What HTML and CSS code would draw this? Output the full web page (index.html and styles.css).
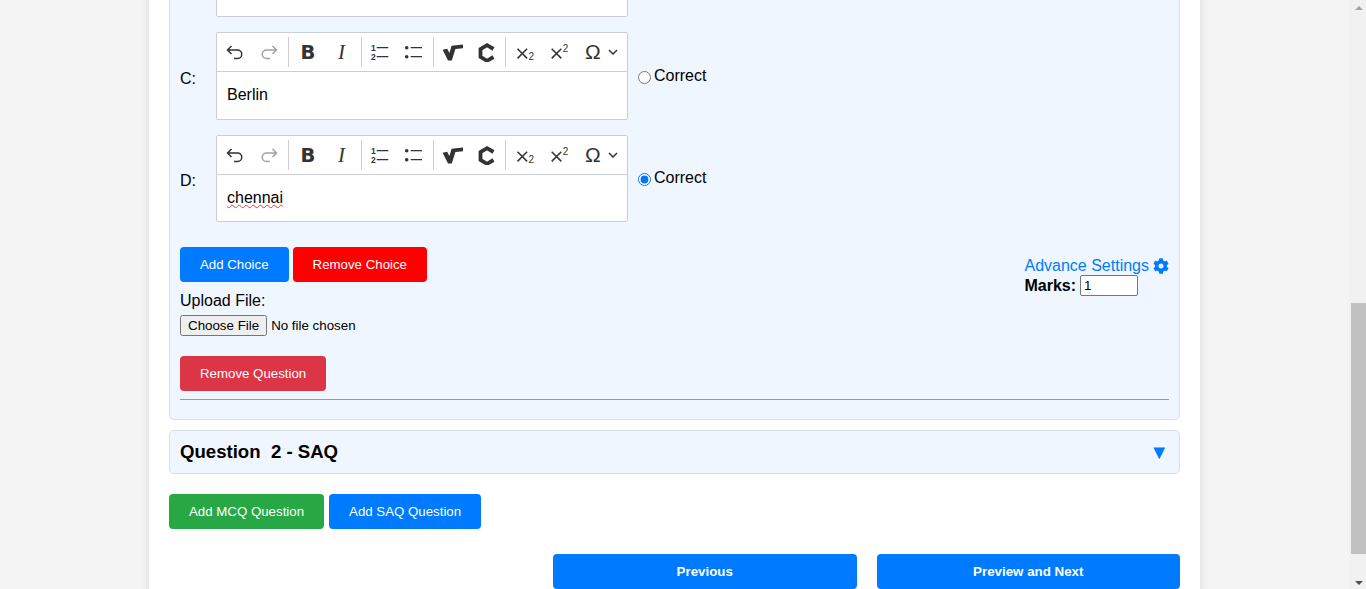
FILE: index.html
```html
<!DOCTYPE html>
<html lang="en">
<head>
    <meta charset="UTF-8">
    <meta name="viewport" content="width=device-width, initial-scale=1.0">
    <title>Edit Questions</title>
    <link rel="stylesheet" href="styles.css">
</head>
<body>
    <!-- toolbar icons, reused by every editor -->
    <svg class="icon-defs" aria-hidden="true">
        <symbol id="i-undo" viewBox="0 0 20 20">
            <path class="line" d="M6.5 4 2.5 8l4 4M3 8h9.5a4.2 4.2 0 0 1 0 8.5H9"/>
        </symbol>
        <symbol id="i-redo" viewBox="0 0 20 20">
            <path class="line" d="M13.5 4l4 4-4 4M17 8H7.5a4.2 4.2 0 0 0 0 8.5H11"/>
        </symbol>
        <symbol id="i-bold" viewBox="0 0 20 20">
            <text class="t-bold" x="10" y="17" text-anchor="middle">B</text>
        </symbol>
        <symbol id="i-italic" viewBox="0 0 20 20">
            <text class="t-italic" x="9.5" y="17" text-anchor="middle">I</text>
        </symbol>
        <symbol id="i-numbered" viewBox="0 0 20 20">
            <text class="t-small" x="1" y="8.5">1</text>
            <text class="t-small" x="1" y="17.5">2</text>
            <path class="thin" d="M6.7 5.7h11.6M6.7 14.7h11.6"/>
        </symbol>
        <symbol id="i-bullet" viewBox="0 0 20 20">
            <circle class="solid" cx="2.7" cy="5.7" r="1.8"/>
            <circle class="solid" cx="2.7" cy="14.7" r="1.8"/>
            <path class="thin" d="M6.7 5.7H18M6.7 14.7H18"/>
        </symbol>
        <symbol id="i-sqrt" viewBox="0 0 22 20">
            <path class="solid" d="M.6 7.8 5.2 6.8l2.2 4.2L9.6 3.8 21 2.6v3.6l-7.6.8L9.8 18.4H6z"/>
        </symbol>
        <symbol id="i-chem" viewBox="0 0 20 20">
            <path class="heavy" d="M17.5 7 11 3.2 4.5 7v8l6.5 3.8 6.5-3.8"/>
        </symbol>
        <symbol id="i-sub" viewBox="0 0 20 20">
            <path class="line" d="M3.5 6.8l9.6 9.6M13.1 6.8l-9.6 9.6"/>
            <text class="t-script" x="14.6" y="18">2</text>
        </symbol>
        <symbol id="i-sup" viewBox="0 0 20 20">
            <path class="line" d="M3.7 6.8l9.6 9.6M13.3 6.8l-9.6 9.6"/>
            <text class="t-script" x="14.8" y="9.6">2</text>
        </symbol>
    </svg>

    <div class="page">
        <div class="card">
            <div class="question-panel open">
                <div class="choice-row">
                    <span class="choice-label"></span>
                    <div class="editor"><div class="editor-body stub"></div></div>
                </div>

                <div class="choice-row">
                    <span class="choice-label">C:</span>
                    <div class="editor">
                        <div class="toolbar">
                            <span class="tool"><svg class="icon"><use href="#i-undo"/></svg></span>
                            <span class="tool off"><svg class="icon"><use href="#i-redo"/></svg></span>
                            <span class="sep wide"></span>
                            <span class="tool"><svg class="icon"><use href="#i-bold"/></svg></span>
                            <span class="tool"><svg class="icon"><use href="#i-italic"/></svg></span>
                            <span class="sep"></span>
                            <span class="tool"><svg class="icon"><use href="#i-numbered"/></svg></span>
                            <span class="tool"><svg class="icon"><use href="#i-bullet"/></svg></span>
                            <span class="sep"></span>
                            <span class="tool"><svg class="icon icon-wide"><use href="#i-sqrt"/></svg></span>
                            <span class="tool"><svg class="icon"><use href="#i-chem"/></svg></span>
                            <span class="sep"></span>
                            <span class="tool"><svg class="icon"><use href="#i-sub"/></svg></span>
                            <span class="tool"><svg class="icon"><use href="#i-sup"/></svg></span>
                            <span class="tool-drop">
                                <span class="omega">Ω</span>
                                <svg class="chevron" viewBox="0 0 10 6"><path class="line" d="M1 1l4 4 4-4"/></svg>
                            </span>
                        </div>
                        <div class="editor-body">Berlin</div>
                    </div>
                    <label class="correct"><input type="radio" name="correct">Correct</label>
                </div>

                <div class="choice-row">
                    <span class="choice-label">D:</span>
                    <div class="editor">
                        <div class="toolbar">
                            <span class="tool"><svg class="icon"><use href="#i-undo"/></svg></span>
                            <span class="tool off"><svg class="icon"><use href="#i-redo"/></svg></span>
                            <span class="sep wide"></span>
                            <span class="tool"><svg class="icon"><use href="#i-bold"/></svg></span>
                            <span class="tool"><svg class="icon"><use href="#i-italic"/></svg></span>
                            <span class="sep"></span>
                            <span class="tool"><svg class="icon"><use href="#i-numbered"/></svg></span>
                            <span class="tool"><svg class="icon"><use href="#i-bullet"/></svg></span>
                            <span class="sep"></span>
                            <span class="tool"><svg class="icon icon-wide"><use href="#i-sqrt"/></svg></span>
                            <span class="tool"><svg class="icon"><use href="#i-chem"/></svg></span>
                            <span class="sep"></span>
                            <span class="tool"><svg class="icon"><use href="#i-sub"/></svg></span>
                            <span class="tool"><svg class="icon"><use href="#i-sup"/></svg></span>
                            <span class="tool-drop">
                                <span class="omega">Ω</span>
                                <svg class="chevron" viewBox="0 0 10 6"><path class="line" d="M1 1l4 4 4-4"/></svg>
                            </span>
                        </div>
                        <div class="editor-body"><span class="misspelt">chennai</span></div>
                    </div>
                    <label class="correct"><input type="radio" name="correct" checked>Correct</label>
                </div>

                <div class="question-tools">
                    <div class="tools-left">
                        <div class="btn-row">
                            <button class="btn btn-blue">Add Choice</button>
                            <button class="btn btn-red">Remove Choice</button>
                        </div>
                        <label class="upload-label" for="upload">Upload File:</label>
                        <input class="upload-input" id="upload" type="file">
                        <button class="btn btn-danger">Remove Question</button>
                    </div>
                    <div class="tools-right">
                        <a class="advance-link" href="#">Advance Settings
                            <svg class="gear" viewBox="0 0 512 512"><path d="M487.4 315.7l-42.6-24.6c4.3-23.2 4.3-47 0-70.2l42.6-24.6c4.9-2.8 7.1-8.6 5.5-14-11.1-35.6-30-67.8-54.7-94.6-3.8-4.1-10-5.1-14.8-2.3L380.8 110c-17.9-15.4-38.5-27.3-60.8-35.1V25.8c0-5.6-3.9-10.5-9.4-11.7-36.7-8.2-74.3-7.8-109.2 0-5.5 1.2-9.4 6.1-9.4 11.7V75c-22.2 7.9-42.8 19.8-60.8 35.1L88.7 85.5c-4.9-2.8-11-1.9-14.8 2.3-24.7 26.7-43.6 58.9-54.7 94.6-1.7 5.4.6 11.2 5.5 14L67.3 221c-4.3 23.2-4.3 47 0 70.2l-42.6 24.6c-4.9 2.8-7.1 8.6-5.5 14 11.1 35.6 30 67.8 54.7 94.6 3.8 4.1 10 5.1 14.8 2.3l42.6-24.6c17.9 15.4 38.5 27.3 60.8 35.1v49.2c0 5.6 3.9 10.5 9.4 11.7 36.7 8.2 74.3 7.8 109.2 0 5.5-1.2 9.4-6.1 9.4-11.7v-49.2c22.2-7.9 42.8-19.8 60.8-35.1l42.6 24.6c4.9 2.8 11 1.9 14.8-2.3 24.7-26.7 43.6-58.9 54.7-94.6 1.5-5.5-.7-11.3-5.6-14.1zM256 336c-44.1 0-80-35.9-80-80s35.9-80 80-80 80 35.9 80 80-35.9 80-80 80z"/></svg>
                        </a>
                        <div class="marks-row">
                            <label class="marks-label" for="marks">Marks:</label>
                            <input class="marks-input" id="marks" type="number" value="1">
                        </div>
                    </div>
                </div>
                <hr class="question-rule">
            </div>

            <div class="question-panel closed">
                <h3>Question&nbsp; 2 - SAQ</h3>
                <span class="toggle">▼</span>
            </div>

            <div class="btn-row add-row">
                <button class="btn btn-green">Add MCQ Question</button>
                <button class="btn btn-blue">Add SAQ Question</button>
            </div>

            <div class="nav-row">
                <button class="btn btn-blue btn-nav">Previous</button>
                <button class="btn btn-blue btn-nav">Preview and Next</button>
            </div>
        </div>
    </div>

    <div class="scrollbar">
        <span class="arrow arrow-up"></span>
        <div class="scroll-track"><div class="scroll-thumb"></div></div>
        <span class="arrow arrow-down"></span>
    </div>
</body>
</html>
```
FILE: styles.css
```css
:root {
    --blue: #007bff;
    --panel: #eff6ff;
    --line: #ccced1;
    --ink: #333;
}

* {
    box-sizing: border-box;
}

body {
    margin: 0;
    height: 100vh;
    overflow: hidden;
    display: flex;
    background-color: #f4f4f4;
    color: #000;
    font-family: "Liberation Sans", Arial, sans-serif;
    font-size: 16px;
}

.icon-defs {
    display: none;
}

.page {
    flex: 1;
    min-width: 0;
    overflow: hidden;
}

.card {
    width: 1051px;
    margin: -40px auto 0;
    padding: 0 20px;
    background-color: white;
    box-shadow: 0 0 10px rgba(0, 0, 0, 0.1);
}

.question-panel {
    border: 1px solid #ddd;
    border-radius: 5px;
    background-color: var(--panel);
    padding: 0 10px;
    margin-bottom: 10px;
}

.question-panel.open {
    padding-bottom: 19px;
}

.question-panel.closed {
    height: 44px;
    display: flex;
    align-items: center;
    justify-content: space-between;
}

.question-panel h3 {
    margin: 0;
    font-size: 18.6px;
}

.toggle {
    font-family: "Liberation Sans", sans-serif;
    font-size: 20px;
    color: var(--blue);
}

/* choices */
.choice-row {
    display: flex;
    align-items: center;
    margin-bottom: 15px;
}

.choice-label {
    width: 36px;
    padding-top: 6px;
}

.editor {
    width: 412px;
    border: 1px solid var(--line);
    border-radius: 2px;
    background-color: white;
}

.toolbar {
    height: 38px;
    padding: 0 1px;
    display: flex;
    align-items: center;
}

.tool {
    width: 34px;
    height: 38px;
    display: flex;
    align-items: center;
    justify-content: center;
}

.tool.off {
    opacity: 0.45;
}

.sep {
    width: 1px;
    height: 30px;
    margin: 0 1px 0 2px;
    background-color: var(--line);
}

.sep.wide {
    margin-right: 2px;
}

.icon {
    width: 20px;
    height: 20px;
    flex: none;
}

.icon-wide {
    width: 22px;
    margin-left: 2px;
}

.line,
.thin,
.heavy {
    fill: none;
    stroke: var(--ink);
}

.line {
    stroke-width: 1.5;
}

.thin {
    stroke-width: 1.3;
}

.heavy {
    stroke-width: 3.8;
}

.solid {
    fill: var(--ink);
}

.t-bold,
.t-italic,
.t-small,
.t-script {
    fill: var(--ink);
}

.t-bold {
    font-family: "DejaVu Sans", sans-serif;
    font-weight: bold;
    font-size: 19.5px;
}

.t-italic {
    font-family: "Liberation Serif", serif;
    font-style: italic;
    font-size: 21px;
}

.t-small {
    font-family: "Liberation Sans", sans-serif;
    font-weight: bold;
    font-size: 8.5px;
}

.t-script {
    font-family: "Liberation Sans", sans-serif;
    font-size: 10px;
}

.tool-drop {
    display: flex;
    align-items: center;
    padding-left: 10px;
}

.omega {
    font-size: 21px;
    line-height: 20px;
    color: var(--ink);
}

.chevron {
    width: 10px;
    height: 6px;
    margin-left: 7px;
}

.editor-body {
    height: 47.6px;
    padding: 0 10px;
    border-top: 1px solid var(--line);
    display: flex;
    align-items: center;
}

.editor-body.stub {
    height: 54px;
    border-top: none;
}

.misspelt {
    text-decoration: underline wavy #f33;
    text-decoration-thickness: 1px;
}

.correct {
    margin-left: 7px;
}

.correct input {
    margin: 3px 3px 0 3px;
    vertical-align: -3px;
}

/* buttons and upload */
.question-tools {
    display: flex;
    justify-content: space-between;
    padding-top: 10px;
}

.tools-left {
    display: flex;
    flex-direction: column;
    align-items: flex-start;
}

.btn-row {
    display: flex;
    gap: 4px;
}

.btn {
    height: 35px;
    padding: 0 20px;
    border: none;
    border-radius: 4px;
    color: white;
    font-family: "Liberation Sans", Arial, sans-serif;
    font-size: 13.28px;
}

.btn-blue {
    background-color: var(--blue);
}

.btn-red {
    background-color: #ff0000;
}

.btn-danger {
    background-color: #dc3545;
    margin-top: 20px;
}

.btn-green {
    background-color: #28a745;
}

.upload-label {
    margin-top: 10px;
    line-height: 18px;
}

.upload-input {
    margin-top: 5px;
    font-family: "Liberation Sans", Arial, sans-serif;
    font-size: 13.33px;
    height: 21px;
}

.tools-right {
    padding-top: 10px;
}

.advance-link {
    display: flex;
    align-items: center;
    gap: 4px;
    color: var(--blue);
    text-decoration: none;
    line-height: 18px;
    white-space: nowrap;
}

.gear {
    width: 16px;
    height: 16px;
    fill: var(--blue);
}

.marks-row {
    display: flex;
    align-items: center;
    gap: 4px;
}

.marks-label {
    font-weight: bold;
}

.marks-input {
    width: 58px;
    height: 21px;
    padding: 1px 3px;
    border: 1px solid #767676;
    border-radius: 2px;
    font-family: "Liberation Sans", Arial, sans-serif;
    font-size: 13.33px;
}

.question-rule {
    margin: 8px 0 0;
    border: none;
    border-top: 1px solid #999;
}

.add-row {
    gap: 5px;
    margin-top: 20px;
}

.nav-row {
    display: flex;
    justify-content: flex-end;
    gap: 20px;
    margin-top: 25px;
    padding-bottom: 30px;
}

.btn-nav {
    width: 303.5px;
    font-weight: bold;
    font-size: 13.33px;
}

/* scrollbar drawn by hand so the thumb sits as in the shot */
.scrollbar {
    width: 17px;
    flex: none;
    display: flex;
    flex-direction: column;
    align-items: flex-end;
    background-color: #f1f1f1;
}

.arrow {
    width: 15px;
    height: 17px;
    display: flex;
    justify-content: center;
}

.arrow::before {
    content: "";
    margin-top: 6px;
    width: 0;
    height: 0;
    border-left: 4px solid transparent;
    border-right: 4px solid transparent;
}

.arrow-up::before {
    border-bottom: 4px solid #a3a3a3;
}

.arrow-down {
    margin-top: auto;
}

.arrow-down::before {
    margin-top: 9px;
    border-top: 4px solid #505050;
}

.scroll-track {
    width: 15px;
    height: 537px;
    padding-top: 286px;
}

.scroll-thumb {
    height: 251px;
    background-color: #c1c1c1;
}
```
